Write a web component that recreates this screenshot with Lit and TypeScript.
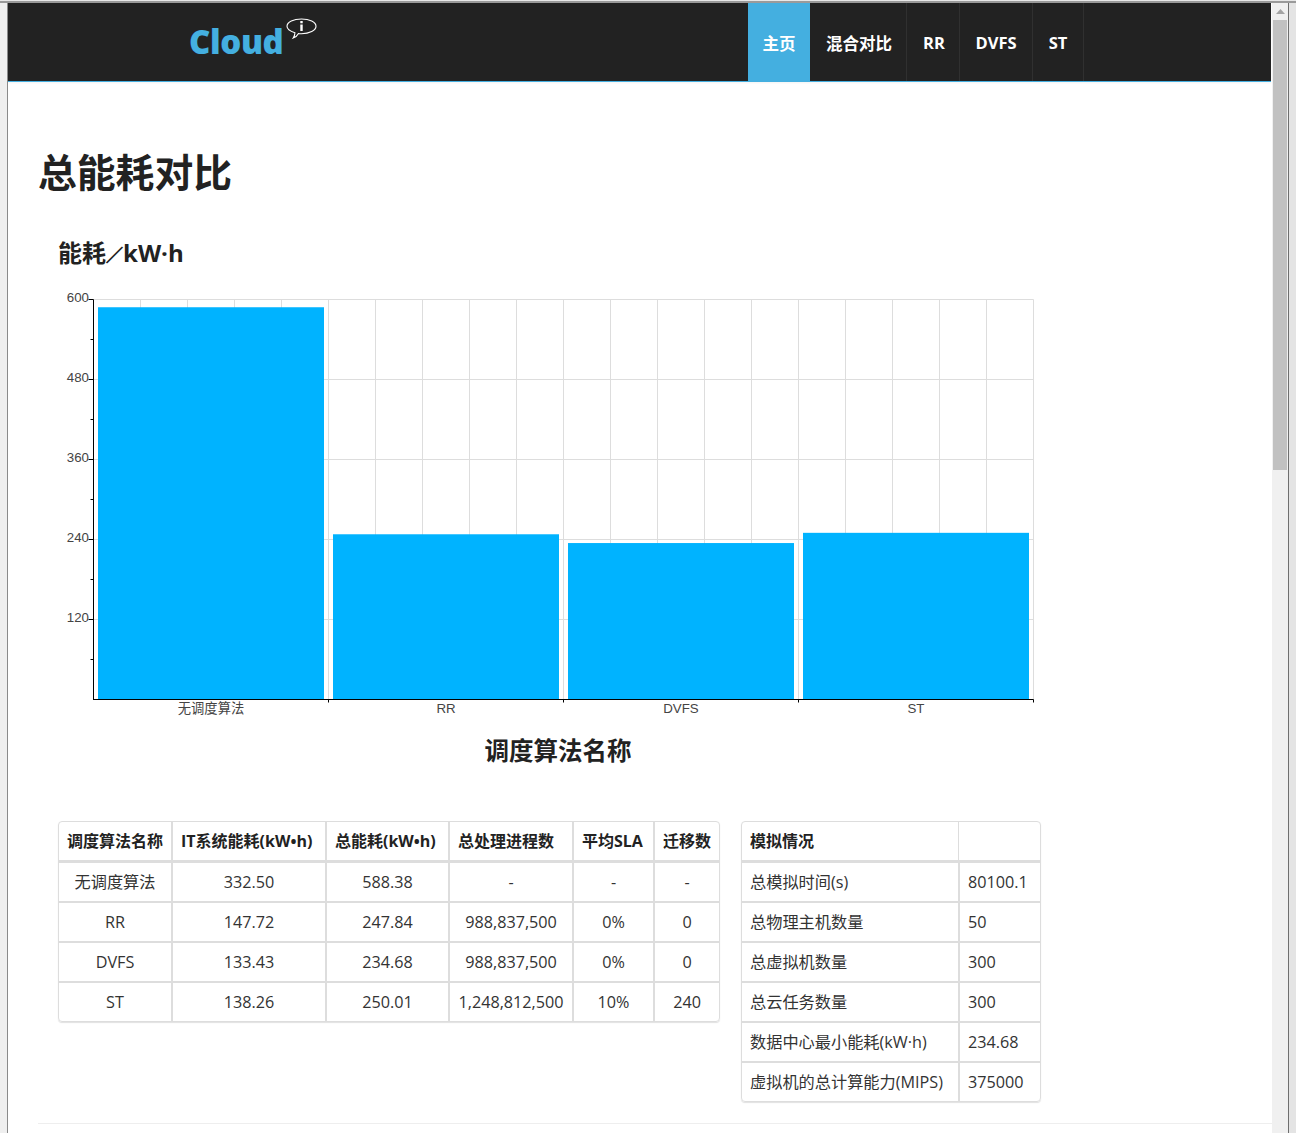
import { LitElement, html, css, svg } from 'lit';
import { customElement } from 'lit/decorators.js';

const NAV = [
  { label: '主页', width: 62, active: true },
  { label: '混合对比', width: 97 },
  { label: 'RR', width: 53 },
  { label: 'DVFS', width: 73 },
  { label: 'ST', width: 51 },
];

const BARS = [
  { label: '无调度算法', value: 588.38 },
  { label: 'RR', value: 247.84 },
  { label: 'DVFS', value: 234.68 },
  { label: 'ST', value: 250.01 },
];

const RESULT_COLS = [112, 154, 123, 124, 81, 66];
const RESULT_HEAD = ['调度算法名称', 'IT系统能耗(kW•h)', '总能耗(kW•h)', '总处理进程数', '平均SLA', '迁移数'];
const RESULT_ROWS = [
  ['无调度算法', '332.50', '588.38', '-', '-', '-'],
  ['RR', '147.72', '247.84', '988,837,500', '0%', '0'],
  ['DVFS', '133.43', '234.68', '988,837,500', '0%', '0'],
  ['ST', '138.26', '250.01', '1,248,812,500', '10%', '240'],
];

const SIM_COLS = [216, 82];
const SIM_ROWS = [
  ['总模拟时间(s)', '80100.1'],
  ['总物理主机数量', '50'],
  ['总虚拟机数量', '300'],
  ['总云任务数量', '300'],
  ['数据中心最小能耗(kW·h)', '234.68'],
  ['虚拟机的总计算能力(MIPS)', '375000'],
];

// chart coordinates are relative to the svg, which starts at x=58
const AXIS_X = 35.5;
const AXIS_BOTTOM = 419.5;
const AXIS_TOP = 19.5;
const PLOT_RIGHT = 975.5;
const SLOT = 235;

@customElement('app-root')
export class AppRoot extends LitElement {
  static styles = css`
    :host {
      display: block;
      height: 1133px;
      overflow: hidden;
      background: #fff;
      color: #333;
      font-family: 'Open Sans', 'Noto Sans CJK SC', sans-serif;
      font-size: 16px;
    }
    .frame-top {
      height: 3px;
      background: linear-gradient(#e8e8e8 0 1px, #9a9a9a 1px);
    }
    .window {
      display: flex;
      height: 1130px;
    }
    .edge-left {
      width: 7px;
      background: #efefef;
      border-right: 1px solid #8a8a8a;
    }
    .edge-right {
      width: 7px;
      background: #e4e4e4;
      border-left: 1px solid #6e6e6e;
    }
    .page {
      width: 1264px;
      flex: none;
      overflow: hidden;
    }
    .scrollbar {
      width: 16px;
      flex: none;
      background: #f0f0f0;
      display: flex;
      flex-direction: column;
      align-items: center;
    }
    .arrow {
      height: 17px;
      flex: none;
      display: flex;
      align-items: center;
      justify-content: center;
    }
    .thumb {
      width: 14px;
      height: 450px;
      background: #c1c1c1;
    }
    header {
      height: 78px;
      margin-right: 1px;
      background: #222;
      border-bottom: 1px solid #44afe0;
      display: flex;
      box-shadow: 0 1px 2px rgba(0, 0, 0, 0.05);
    }
    .brand {
      width: 740px;
      flex: none;
      display: flex;
      align-items: flex-start;
      padding-left: 181px;
      box-sizing: border-box;
    }
    .brand-name {
      color: #44afe0;
      font-size: 33px;
      font-weight: 800;
      letter-spacing: -0.4px;
      line-height: 46px;
      margin-top: 16px;
    }
    .bubble {
      margin: 15px 0 0 3px;
    }
    nav {
      display: flex;
    }
    nav a {
      display: flex;
      align-items: center;
      justify-content: center;
      box-sizing: border-box;
      color: #fff;
      font-size: 16.5px;
      font-weight: 700;
      padding: 1px 0 0 2px;
      border-right: 1px solid #303030;
    }
    nav a:nth-child(n + 4) {
      padding-left: 0;
    }
    nav a.active {
      background: #44afe0;
      border-right: none;
      padding-left: 0;
    }
    main {
      padding: 0 0 0 30px;
    }
    h1 {
      margin: 0;
      padding-top: 62px;
      font-size: 38.8px;
      line-height: 56px;
      font-weight: 700;
      color: #222;
    }
    h2 {
      margin: 0;
      font-weight: 700;
      color: #222;
      font-size: 24px;
      line-height: 34px;
    }
    .y-title {
      margin: 36px 0 0 20px;
    }
    .slash {
      font-size: 17px;
      -webkit-text-stroke: 0.7px #222;
    }
    .chart {
      display: block;
      margin: 7px 0 0 20px;
    }
    .x-title {
      width: 1040px;
      text-align: center;
      margin-top: 14px;
      font-size: 24.5px;
    }
    .tables {
      display: flex;
      align-items: flex-start;
      gap: 21px;
      margin: 53px 0 0 20px;
    }
    table {
      border-collapse: separate;
      border-spacing: 0;
      table-layout: fixed;
      border: 1px solid #ddd;
      border-radius: 4px;
      box-shadow: 0 1px 1px rgba(0, 0, 0, 0.12);
      box-sizing: border-box;
    }
    th,
    td {
      height: 40px;
      padding: 0 8px;
      box-sizing: border-box;
      text-align: center;
      white-space: nowrap;
      border-left: 2px solid #ddd;
      border-top: 2px solid #ddd;
      font-size: 16.2px;
      line-height: 22px;
    }
    th {
      font-size: 16px;
      font-weight: 700;
      color: #222;
      text-align: left;
      border-top: none;
      border-bottom: 1px solid #ddd;
      height: 39px;
    }
    th:first-child,
    td:first-child {
      border-left: none;
    }
    .sim td {
      text-align: left;
    }
    .sim th + th {
      border-left-width: 1px;
    }
    hr {
      border: none;
      border-top: 1px solid #eee;
      margin: 21px 0 0;
    }
  `;

  renderChart() {
    const scale = (AXIS_BOTTOM - AXIS_TOP) / 600;
    const vGrid = Array.from({ length: 20 }, (_, i) => AXIS_X + 47 * (i + 1));
    const hGrid = [1, 2, 3, 4, 5].map((n) => AXIS_BOTTOM - 80 * n);
    const minor = [0, 1, 2, 3, 4].map((n) => AXIS_BOTTOM - 40 - 80 * n);
    return html`<svg class="chart" width="990" height="440" viewBox="0 0 990 440">
      <g stroke="#ddd" stroke-width="1">
        ${vGrid.map((x) => svg`<line x1=${x} x2=${x} y1=${AXIS_TOP} y2=${AXIS_BOTTOM}></line>`)}
        ${hGrid.map((y) => svg`<line x1=${AXIS_X} x2=${PLOT_RIGHT} y1=${y} y2=${y}></line>`)}
      </g>
      ${BARS.map(
        (b, i) => svg`<rect x=${40 + SLOT * i} y=${AXIS_BOTTOM - b.value * scale} width="226"
          height=${b.value * scale} fill="#00b3ff"></rect>`
      )}
      <g stroke="#000" stroke-width="1">
        <line x1=${AXIS_X} x2=${AXIS_X} y1=${AXIS_TOP} y2=${AXIS_BOTTOM + 0.5}></line>
        <line x1=${AXIS_X} x2=${PLOT_RIGHT} y1=${AXIS_BOTTOM} y2=${AXIS_BOTTOM}></line>
        ${hGrid.map((y) => svg`<line x1=${AXIS_X - 5} x2=${AXIS_X} y1=${y} y2=${y}></line>`)}
        ${minor.map((y) => svg`<line x1=${AXIS_X - 3} x2=${AXIS_X} y1=${y} y2=${y}></line>`)}
        ${BARS.map((_, i) => {
          const x = AXIS_X + SLOT * (i + 1);
          return svg`<line x1=${x} x2=${x} y1=${AXIS_BOTTOM} y2=${AXIS_BOTTOM + 3}></line>`;
        })}
      </g>
      <g font-family="'Liberation Sans','Noto Sans CJK SC',sans-serif" font-size="13.3" fill="#444">
        ${[600, 480, 360, 240, 120].map(
          (v, i) => svg`<text x="31" y=${AXIS_TOP + 80 * i + 2} text-anchor="end">${v}</text>`
        )}
        ${BARS.map(
          (b, i) => svg`<text x=${AXIS_X + SLOT * i + SLOT / 2} y="433" text-anchor="middle">${b.label}</text>`
        )}
      </g>
    </svg>`;
  }

  renderCols(cols: number[]) {
    return html`<colgroup>
      ${cols.map((w) => html`<col style="width:${w}px" />`)}
    </colgroup>`;
  }

  render() {
    return html`
      <div class="frame-top"></div>
      <div class="window">
        <div class="edge-left"></div>
        <div class="page">
          <header>
            <div class="brand">
              <span class="brand-name">Cloud</span>
              <svg class="bubble" width="31" height="24" viewBox="0 0 31 24">
                <path
                  d="M15.5 1C23.5 1 30 4.2 30 8.3c0 4.1-6.5 7.4-14.5 7.4-1 0-2 0-3-.2-1 2-3 3.6-5.3 4.5 1-1.4 1.7-3 1.7-5.3C4 13.3 1 11 1 8.3 1 4.2 7.5 1 15.5 1z"
                  fill="none"
                  stroke="#fff"
                  stroke-width="1.1"
                ></path>
                <rect x="14.3" y="3" width="2.4" height="2.3" fill="#fff"></rect>
                <rect x="14.3" y="6.5" width="2.4" height="6.5" fill="#fff"></rect>
              </svg>
            </div>
            <nav>
              ${NAV.map(
                (n) => html`<a class=${n.active ? 'active' : ''} style="width:${n.width}px">${n.label}</a>`
              )}
            </nav>
          </header>
          <main>
            <h1>总能耗对比</h1>
            <h2 class="y-title">能耗<span class="slash">／</span>kW·h</h2>
            ${this.renderChart()}
            <h2 class="x-title">调度算法名称</h2>
            <div class="tables">
              <table>
                ${this.renderCols(RESULT_COLS)}
                <thead>
                  <tr>${RESULT_HEAD.map((h) => html`<th>${h}</th>`)}</tr>
                </thead>
                <tbody>
                  ${RESULT_ROWS.map((r) => html`<tr>${r.map((c) => html`<td>${c}</td>`)}</tr>`)}
                </tbody>
              </table>
              <table class="sim">
                ${this.renderCols(SIM_COLS)}
                <thead>
                  <tr><th>模拟情况</th><th></th></tr>
                </thead>
                <tbody>
                  ${SIM_ROWS.map((r) => html`<tr>${r.map((c) => html`<td>${c}</td>`)}</tr>`)}
                </tbody>
              </table>
            </div>
            <hr />
          </main>
        </div>
        <div class="scrollbar">
          <div class="arrow">
            <svg width="9" height="5" viewBox="0 0 9 5"><path d="M4.5 0L9 5H0z" fill="#a3a3a3"></path></svg>
          </div>
          <div class="thumb"></div>
        </div>
        <div class="edge-right"></div>
      </div>
    `;
  }
}
